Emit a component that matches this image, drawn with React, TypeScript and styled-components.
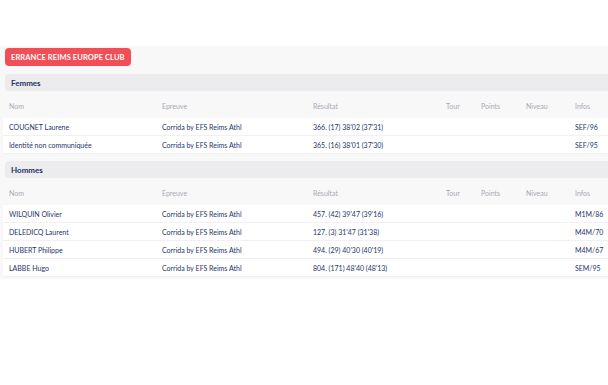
import React from "react";
import styled, { createGlobalStyle } from "styled-components";

const GlobalStyle = createGlobalStyle`
  body {
    margin: 0;
    background: #ffffff;
    font-family: "Lato", "Noto Sans", sans-serif;
  }
`;

type Result = {
  nom: string;
  epreuve: string;
  resultat: string;
  infos: string;
};

const femmes: Result[] = [
  { nom: "COUGNET Laurene", epreuve: "Corrida by EFS Reims Athl", resultat: "366. (17) 38'02 (37'31)", infos: "SEF/96" },
  { nom: "Identité non communiquée", epreuve: "Corrida by EFS Reims Athl", resultat: "365. (16) 38'01 (37'30)", infos: "SEF/95" },
];

const hommes: Result[] = [
  { nom: "WILQUIN Olivier", epreuve: "Corrida by EFS Reims Athl", resultat: "457. (42) 39'47 (39'16)", infos: "M1M/86" },
  { nom: "DELEDICQ Laurent", epreuve: "Corrida by EFS Reims Athl", resultat: "127. (3) 31'47 (31'38)", infos: "M4M/70" },
  { nom: "HUBERT Philippe", epreuve: "Corrida by EFS Reims Athl", resultat: "494. (29) 40'30 (40'19)", infos: "M4M/67" },
  { nom: "LABBE Hugo", epreuve: "Corrida by EFS Reims Athl", resultat: "804. (171) 48'40 (48'13)", infos: "SEM/95" },
];

const Page = styled.div`
  padding-top: 46px;
`;

const Panel = styled.section`
  background: #f8f8f9;
  padding: 2px 0 2px 3px;
`;

const ClubBadge = styled.div`
  display: flex;
  align-items: center;
  width: fit-content;
  margin-left: 2px;
  height: 18px;
  padding: 0 6px;
  border-radius: 4px;
  background: #f24e56;
  color: #ffffff;
  font-size: 7.5px;
  font-weight: 700;
  letter-spacing: 0.1px;
`;

const SectionBar = styled.div<{ $top: number }>`
  margin: ${(p) => p.$top}px 0 0 2px;
  height: 17px;
  display: flex;
  align-items: center;
  padding-left: 6px;
  border-radius: 4px 0 0 4px;
  background: #ececee;
  color: #26325e;
  font-size: 8px;
  font-weight: 700;
`;

const Grid = styled.div<{ $head?: boolean }>`
  display: grid;
  grid-template-columns: 153px 151px 133px 35px 45px 49px 1fr;
  align-items: center;
  padding-left: 6px;
  font-size: 7px;
  ${(p) =>
    p.$head
      ? `
    height: 24px;
    padding-top: 3px;
    color: #a9a9b3;
  `
      : `
    height: 17px;
    background: #ffffff;
    border-bottom: 1px solid #f1f1f3;
    color: #27336a;
  `}
`;

const Cell = styled.span`
  white-space: nowrap;
`;

function Section({ title, rows, top }: { title: string; rows: Result[]; top: number }) {
  return (
    <>
      <SectionBar $top={top}>{title}</SectionBar>
      <Grid $head>
        <Cell>Nom</Cell>
        <Cell>Epreuve</Cell>
        <Cell>Résultat</Cell>
        <Cell>Tour</Cell>
        <Cell>Points</Cell>
        <Cell>Niveau</Cell>
        <Cell>Infos</Cell>
      </Grid>
      {rows.map((r) => (
        <Grid key={r.nom + r.resultat}>
          <Cell>{r.nom}</Cell>
          <Cell>{r.epreuve}</Cell>
          <Cell>{r.resultat}</Cell>
          <Cell />
          <Cell />
          <Cell />
          <Cell>{r.infos}</Cell>
        </Grid>
      ))}
    </>
  );
}

export default function App() {
  return (
    <Page>
      <GlobalStyle />
      <Panel>
        <ClubBadge>ERRANCE REIMS EUROPE CLUB</ClubBadge>
        <Section title="Femmes" rows={femmes} top={8} />
        <Section title="Hommes" rows={hommes} top={7} />
      </Panel>
    </Page>
  );
}
